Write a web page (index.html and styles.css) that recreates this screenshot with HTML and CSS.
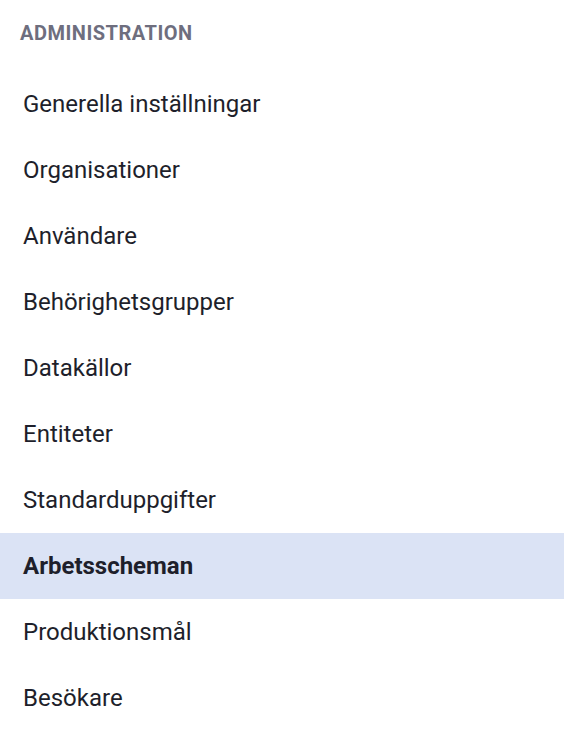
FILE: index.html
```html
<!DOCTYPE html>
<html lang="sv">
<head>
  <meta charset="UTF-8" />
  <meta name="viewport" content="width=device-width, initial-scale=1.0" />
  <title>Administration</title>
  <link rel="stylesheet" href="styles.css">
</head>
<body>
  <nav class="admin-menu">
    <h2 class="menu-title">ADMINISTRATION</h2>
    <ul class="menu-list">
      <li class="menu-item">Generella inställningar</li>
      <li class="menu-item">Organisationer</li>
      <li class="menu-item">Användare</li>
      <li class="menu-item">Behörighetsgrupper</li>
      <li class="menu-item">Datakällor</li>
      <li class="menu-item">Entiteter</li>
      <li class="menu-item">Standarduppgifter</li>
      <li class="menu-item active">Arbetsscheman</li>
      <li class="menu-item">Produktionsmål</li>
      <li class="menu-item">Besökare</li>
    </ul>
  </nav>
</body>
</html>
```

FILE: styles.css
```css
html, body {
  margin: 0;
  padding: 0;
  background: #fff;
  font-family: Roboto, 'Noto Sans', sans-serif;
}

.admin-menu {
  width: 564px;
}

.menu-title {
  margin: 0;
  padding: 21px 20px 0;
  font-size: 20px;
  line-height: 24px;
  font-weight: 700;
  letter-spacing: 0.5px;
  color: #6e6e7e;
}

.menu-list {
  list-style: none;
  margin: 26px 0 0;
  padding: 0;
}

.menu-item {
  display: flex;
  align-items: center;
  height: 66px;
  padding-left: 23px;
  font-size: 24px;
  color: #1e1f2b;
}

.menu-item.active {
  background: #dbe3f5;
  font-weight: 700;
}
```
